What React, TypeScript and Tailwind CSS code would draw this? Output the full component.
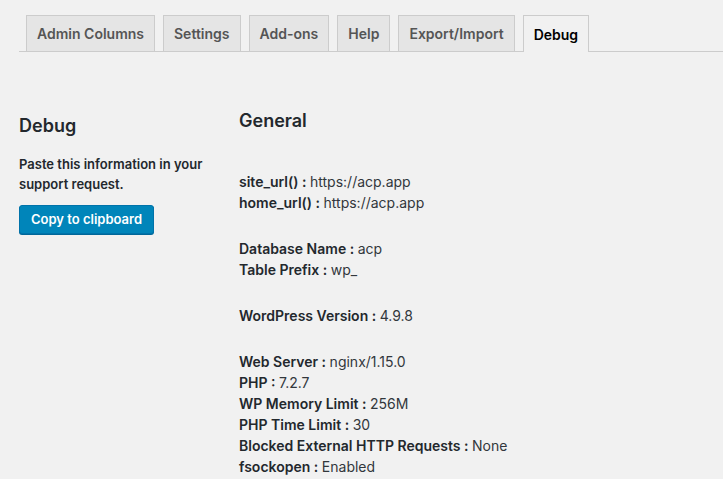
const tabs = ["Admin Columns", "Settings", "Add-ons", "Help", "Export/Import", "Debug"];

const groups: [string, string][][] = [
  [
    ["site_url()", "https://acp.app"],
    ["home_url()", "https://acp.app"],
  ],
  [
    ["Database Name", "acp"],
    ["Table Prefix", "wp_"],
  ],
  [["WordPress Version", "4.9.8"]],
  [
    ["Web Server", "nginx/1.15.0"],
    ["PHP", "7.2.7"],
    ["WP Memory Limit", "256M"],
    ["PHP Time Limit", "30"],
    ["Blocked External HTTP Requests", "None"],
    ["fsockopen", "Enabled"],
  ],
];

export default function App() {
  return (
    <div className="h-[479px] w-[723px] overflow-hidden bg-[#f1f1f1] font-['Inter',sans-serif] text-[#23282d]">
      {/* tabs */}
      <div className="ml-[19px] mt-[15px] flex h-[37px] items-end gap-[8px] border-b border-[#ccc] pl-[7px]">
        {tabs.map((t) => {
          const active = t === "Debug";
          return (
            <div
              key={t}
              className={
                active
                  ? "-mb-px flex h-[37px] items-center border border-b-0 border-[#ccc] bg-[#f1f1f1] px-[10px] text-[14px] font-semibold text-black"
                  : "flex h-[36px] items-center border border-b-0 border-[#ccc] bg-[#e5e5e5] px-[10px] text-[14px] font-semibold text-[#555]"
              }
            >
              {t}
            </div>
          );
        })}
      </div>

      <div className="flex pl-[19px] pt-[62px]">
        {/* left column */}
        <div className="w-[220px] shrink-0">
          <h2 className="text-[18px] font-semibold leading-[24px]">Debug</h2>
          <p className="mt-[16px] w-[200px] text-[13px] font-semibold leading-[20px]">
            Paste this information in your support request.
          </p>
          <button className="mt-[11px] h-[29px] w-[135px] rounded-[3px] border border-[#0073aa] bg-[#0085ba] text-[13px] font-semibold text-white shadow-[0_1px_0_#006799]">
            Copy to clipboard
          </button>
        </div>

        {/* right column */}
        <div className="-mt-[5px]">
          <h2 className="text-[18px] font-semibold leading-[24px]">General</h2>
          <div className="mt-[38px] flex flex-col gap-[25px] text-[14px] leading-[21px]">
            {groups.map((g, i) => (
              <div key={i}>
                {g.map(([k, v]) => (
                  <div key={k}>
                    <span className="font-semibold">{k} : </span>
                    <span className="text-[#32373c]">{v}</span>
                  </div>
                ))}
              </div>
            ))}
          </div>
        </div>
      </div>
    </div>
  );
}
